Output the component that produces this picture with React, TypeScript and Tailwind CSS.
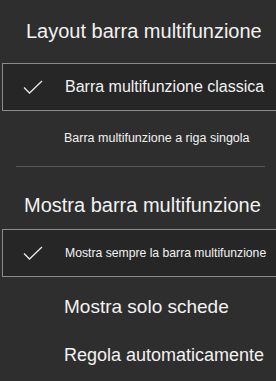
import React from "react";

function Check() {
  return (
    <svg width="20" height="14" viewBox="0 0 20 14" fill="none" className="shrink-0">
      <path d="M1 7.5 L6.5 13 L19 1" stroke="#e8e8e8" strokeWidth="1.3" />
    </svg>
  );
}

function Option({ label, selected, size, extra = "" }: { label: string; selected?: boolean; size: string; extra?: string }) {
  return (
    <div
      className={
        selected
          ? `flex items-center h-[48px] w-[274px] ml-[2px] border-y border-l border-[#8c8c8c] bg-[#262626] shrink-0 ${extra}`
          : `flex items-center h-[48px] ml-[2px] shrink-0 ${extra}`
      }
    >
      <div className="w-[62px] shrink-0 flex justify-center pr-[3px]">{selected && <Check />}</div>
      <span className={`${size} text-[#f2f2f2] whitespace-nowrap`}>{label}</span>
    </div>
  );
}

export default function App() {
  return (
    <div
      className="w-[276px] h-[381px] bg-[#2e2e2e] overflow-hidden flex flex-col items-start"
      style={{ fontFamily: '"Liberation Sans", Arial, sans-serif' }}
    >
      <div className="h-[63px] shrink-0 flex items-center pl-[26px] pb-[2px]">
        <span className="text-[20px] text-[#f2f2f2] whitespace-nowrap">Layout barra multifunzione</span>
      </div>
      <Option label="Barra multifunzione classica" selected size="text-[16px]" />
      <Option label="Barra multifunzione a riga singola" size="text-[12.5px]" extra="mt-[3px]" />
      <div className="h-[1px] w-[249px] shrink-0 bg-[#575757] ml-[16px] mt-[4px]" />
      <div className="h-[62px] shrink-0 flex items-center pl-[24px] pt-[13px]">
        <span className="text-[20px] text-[#f2f2f2] whitespace-nowrap">Mostra barra multifunzione</span>
      </div>
      <Option label="Mostra sempre la barra multifunzione" selected size="text-[12.2px]" />
      <Option label="Mostra solo schede" size="text-[19px]" extra="mt-[6px]" />
      <Option label="Regola automaticamente" size="text-[18px]" />
    </div>
  );
}
